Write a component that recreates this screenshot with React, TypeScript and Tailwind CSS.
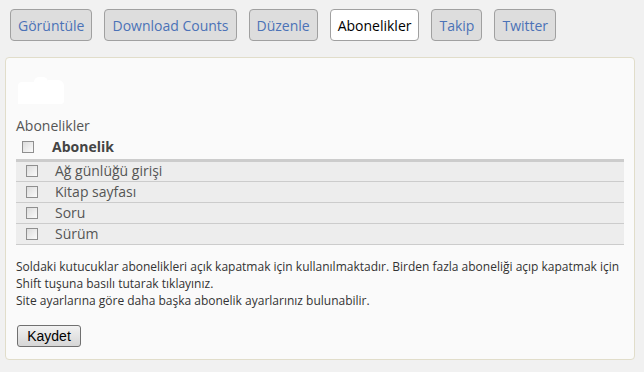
import { useState } from 'react';

const tabs = ['Görüntüle', 'Download Counts', 'Düzenle', 'Abonelikler', 'Takip', 'Twitter'];
const rows = ['Ağ günlüğü girişi', 'Kitap sayfası', 'Soru', 'Sürüm'];

function Box({ checked, onChange }: { checked: boolean; onChange: () => void }) {
  return (
    <button
      onClick={onChange}
      className="w-[12px] h-[12px] border border-[#8f8f8f] bg-gradient-to-br from-[#dcdcdc] to-[#fbfbfb] flex items-center justify-center text-[9px] leading-none text-[#333]"
    >
      {checked ? '✓' : ''}
    </button>
  );
}

export default function App() {
  const [active, setActive] = useState('Abonelikler');
  const [all, setAll] = useState(false);
  const [checked, setChecked] = useState<Record<string, boolean>>({});

  return (
    <div className="min-h-[372px] bg-[#f1f1f1] font-['Open_Sans',sans-serif] pt-[9px]">
      <nav className="flex gap-[12px] pl-[10px]">
        {tabs.map((t) =>
          t === active ? (
            <span
              key={t}
              className="h-[32px] px-[7px] flex items-center rounded-[4px] border border-[#a0a0a0] bg-white text-[14px] text-black"
            >
              {t}
            </span>
          ) : (
            <button
              key={t}
              onClick={() => setActive(t)}
              className="h-[32px] px-[7px] flex items-center rounded-[4px] border border-[#a0a0a0] bg-[#dddddd] text-[14px] text-[#4b72b7]"
            >
              {t}
            </button>
          ),
        )}
      </nav>

      <section className="mt-[16px] ml-[5px] w-[630px] h-[303px] rounded-[4px] border border-[#e1ddca] bg-[#fafafa] pl-[10px] pr-[10px]">
        {/* broken image placeholder */}
        <div className="mt-[19px] ml-[2px] flex items-end">
          <div className="w-[16px] h-[22px] bg-white rounded-tl-[4px]" />
          <div className="w-[14px] h-[27px] bg-white rounded-t-[5px]" />
          <div className="w-[16px] h-[24px] bg-white rounded-tr-[6px] rounded-br-[3px]" />
        </div>

        <div className="mt-[13px] text-[14px] text-[#555] leading-[18px]">Abonelikler</div>

        <table className="mt-[1px] w-[608px] border-collapse text-[14px] text-[#555]">
          <thead>
            <tr className="border-b-[3px] border-[#cccccc] h-[24px]">
              <th className="w-[36px] pl-[6px] align-middle">
                <Box
                  checked={all}
                  onChange={() => {
                    const v = !all;
                    setAll(v);
                    setChecked(Object.fromEntries(rows.map((r) => [r, v])));
                  }}
                />
              </th>
              <th className="text-left font-bold text-[#444] leading-[18px]">Abonelik</th>
            </tr>
          </thead>
          <tbody>
            {rows.map((r) => (
              <tr key={r} className="h-[21px] bg-[#ededed] border-b border-[#cccccc]">
                <td className="pl-[10px] align-middle">
                  <Box
                    checked={!!checked[r]}
                    onChange={() => setChecked((p) => ({ ...p, [r]: !p[r] }))}
                  />
                </td>
                <td className="pl-[3px] leading-[18px]">{r}</td>
              </tr>
            ))}
          </tbody>
        </table>

        <div className="mt-[13px] text-[12px] leading-[17px] text-[#333]">
          <p>
            Soldaki kutucuklar abonelikleri açık kapatmak için kullanılmaktadır. Birden fazla aboneliği açıp kapatmak için
            Shift tuşuna basılı tutarak tıklayınız.
          </p>
          <p>Site ayarlarına göre daha başka abonelik ayarlarınız bulunabilir.</p>
        </div>

        <button className="mt-[16px] ml-[1px] w-[64px] h-[22px] rounded-[3px] border border-[#707070] bg-gradient-to-b from-[#f2f2f2] to-[#d6d6d6] text-[14px] text-black font-['Liberation_Sans',sans-serif] leading-none">
          Kaydet
        </button>
      </section>
    </div>
  );
}
